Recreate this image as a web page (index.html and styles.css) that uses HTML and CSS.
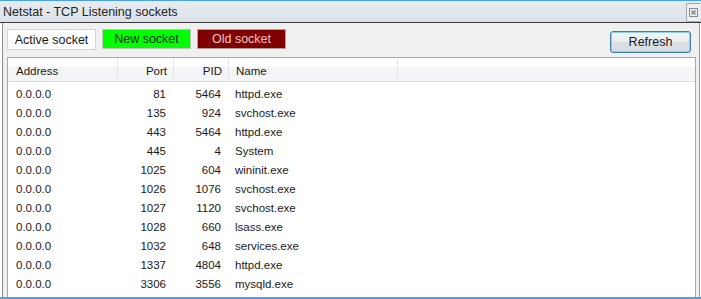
FILE: index.html
```html
<!DOCTYPE html>
<html lang="en">
<head>
    <meta charset="UTF-8">
    <title>Netstat - TCP Listening sockets</title>
    <link rel="stylesheet" href="styles.css">
</head>
<body>
    <div class="window">
        <div class="titlebar">
            <span class="title">Netstat - TCP Listening sockets</span>
            <span class="close">
                <svg width="9" height="9" viewBox="0 0 9 9">
                    <rect x="0.5" y="0.5" width="8" height="8" fill="none" stroke="#8a8a8a"/>
                    <path d="M2.5 2.5 L6.5 6.5 M6.5 2.5 L2.5 6.5" stroke="#7a7a7a" stroke-width="1.2"/>
                </svg>
            </span>
        </div>
        <div class="client">
            <div class="toolbar">
                <span class="legend legend-active">Active socket</span>
                <span class="legend legend-new">New socket</span>
                <span class="legend legend-old">Old socket</span>
                <button class="refresh">Refresh</button>
            </div>
            <div class="list">
                <div class="row header">
                    <span class="col">Address</span>
                    <span class="col num">Port</span>
                    <span class="col num">PID</span>
                    <span class="col name">Name</span>
                    <span class="col filler"></span>
                </div>
                <div class="rows">
                    <div class="row"><span class="col">0.0.0.0</span><span class="col num">81</span><span class="col num">5464</span><span class="col name">httpd.exe</span></div>
                    <div class="row"><span class="col">0.0.0.0</span><span class="col num">135</span><span class="col num">924</span><span class="col name">svchost.exe</span></div>
                    <div class="row"><span class="col">0.0.0.0</span><span class="col num">443</span><span class="col num">5464</span><span class="col name">httpd.exe</span></div>
                    <div class="row"><span class="col">0.0.0.0</span><span class="col num">445</span><span class="col num">4</span><span class="col name">System</span></div>
                    <div class="row"><span class="col">0.0.0.0</span><span class="col num">1025</span><span class="col num">604</span><span class="col name">wininit.exe</span></div>
                    <div class="row"><span class="col">0.0.0.0</span><span class="col num">1026</span><span class="col num">1076</span><span class="col name">svchost.exe</span></div>
                    <div class="row"><span class="col">0.0.0.0</span><span class="col num">1027</span><span class="col num">1120</span><span class="col name">svchost.exe</span></div>
                    <div class="row"><span class="col">0.0.0.0</span><span class="col num">1028</span><span class="col num">660</span><span class="col name">lsass.exe</span></div>
                    <div class="row"><span class="col">0.0.0.0</span><span class="col num">1032</span><span class="col num">648</span><span class="col name">services.exe</span></div>
                    <div class="row"><span class="col">0.0.0.0</span><span class="col num">1337</span><span class="col num">4804</span><span class="col name">httpd.exe</span></div>
                    <div class="row"><span class="col">0.0.0.0</span><span class="col num">3306</span><span class="col num">3556</span><span class="col name">mysqld.exe</span></div>
                </div>
            </div>
        </div>
    </div>
</body>
</html>
```

FILE: styles.css
```css
body {
    margin: 0;
    padding: 0;
    background-color: #ffffff;
    font-family: "Liberation Sans", Arial, sans-serif;
    color: #1a1a1a;
}

.window {
    width: 701px;
    height: 299px;
    display: flex;
    flex-direction: column;
    border-top: 1px solid #4aa2ea;
    border-bottom: 2px solid #4aa2ea;
    box-sizing: border-box;
    overflow: hidden;
}

.titlebar {
    height: 22px;
    box-sizing: border-box;
    display: flex;
    align-items: center;
    justify-content: space-between;
    padding-left: 3px;
    background: linear-gradient(to bottom, #e7ecf1, #dbe2ea);
    border-bottom: 1px solid #3c3c3c;
}

.title {
    font-size: 12.5px;
    color: #222;
}

.close {
    width: 13px;
    height: 17px;
    margin-top: 2px;
    margin-right: 1px;
    display: flex;
    align-items: center;
    justify-content: center;
    background-color: #eef1f4;
    border: 1px solid #a4a8ad;
    border-right: none;
    border-radius: 2px 0 0 2px;
}

.client {
    flex: 1;
    display: flex;
    flex-direction: column;
    margin-left: 2px;
    margin-right: 1px;
    background-color: #f0f0f0;
    border-left: 1px solid #8e8e8e;
    border-right: 1px solid #9a9a9a;
    overflow: hidden;
}

.toolbar {
    display: flex;
    align-items: flex-start;
    gap: 6px;
    height: 23px;
    padding: 6px 8px 0 4px;
}

.legend {
    width: 89px;
    height: 21px;
    box-sizing: border-box;
    display: flex;
    align-items: center;
    justify-content: center;
    font-size: 12.5px;
    border: 1px solid #d4d4d4;
}

.legend-active {
    background-color: #ffffff;
    color: #1a1a1a;
}

.legend-new {
    height: 20px;
    background-color: #00ff00;
    color: #0f2a0f;
    border-color: #b8c8b8;
}

.legend-old {
    height: 20px;
    background-color: #800000;
    color: #f2c4c4;
    border-color: #b0a0a0;
}

.refresh {
    margin-left: auto;
    margin-top: 2px;
    width: 81px;
    height: 22px;
    font-family: "Liberation Sans", Arial, sans-serif;
    font-size: 12.5px;
    color: #1a1a1a;
    background: linear-gradient(to bottom, #f4f6f8 0%, #e9ecef 50%, #dde1e5 51%, #d6dadf 100%);
    border: 1px solid #3c7fb1;
    border-radius: 3px;
    box-shadow: inset 0 0 0 1px #8fd0f0;
    padding: 0;
}

.list {
    margin: 5px 3px 0 4px;
    height: 260px;
    flex-shrink: 0;
    background-color: #ffffff;
    border: 1px solid #a6a9ad;
    font-size: 11.5px;
}

.row {
    display: grid;
    grid-template-columns: 110px 56px 55px 169px 1fr;
    height: 19px;
    align-items: center;
}

.col {
    padding-left: 8px;
    white-space: nowrap;
}

.col.num {
    text-align: right;
    padding-left: 0;
    padding-right: 8px;
}

.col.name {
    padding-left: 6px;
}

.header {
    height: 24px;
    align-items: stretch;
    background: linear-gradient(to bottom, #ffffff 0%, #ffffff 40%, #f4f5f6 41%, #f4f5f6 100%);
    border-bottom: 1px solid #dadcdf;
    box-sizing: border-box;
}

.header .col {
    padding-top: 7px;
    border-right: 1px solid #e4e5e7;
}

.header .col.num {
    padding-right: 6px;
}

.header .col.name {
    padding-left: 7px;
}

.header .col.filler {
    border-right: none;
}

.rows {
    padding-top: 2px;
}
```
